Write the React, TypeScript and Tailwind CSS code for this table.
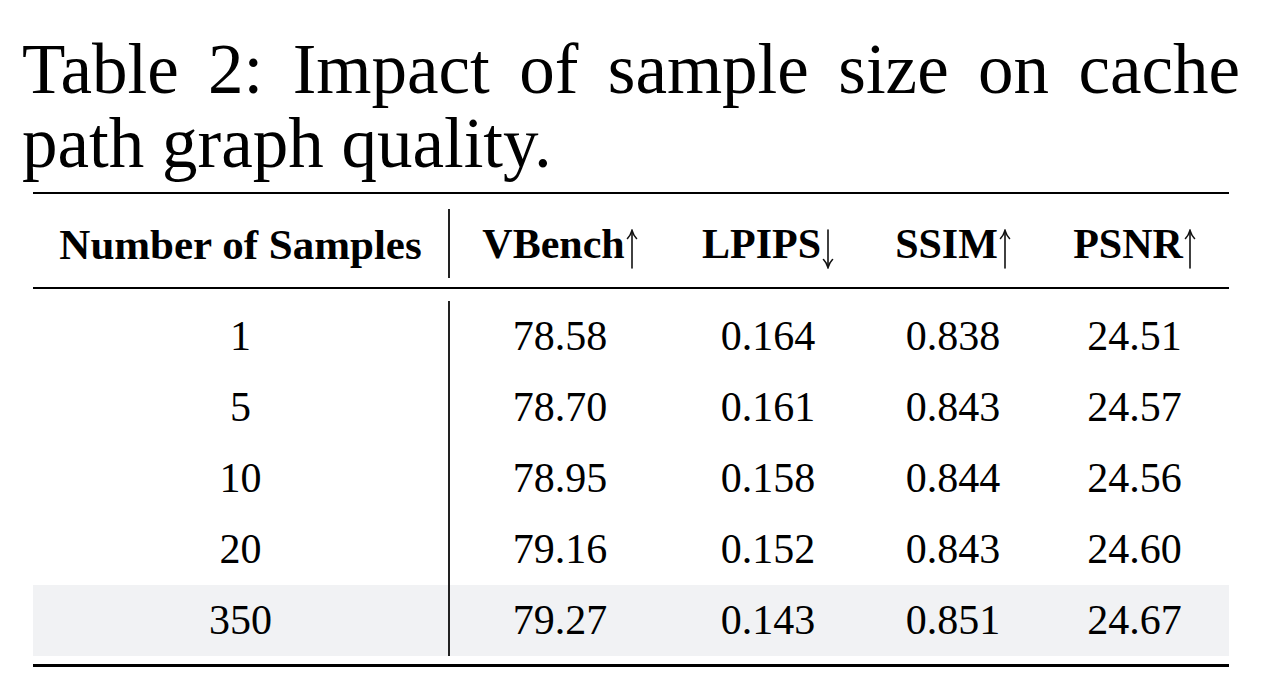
import React from "react";

const rows = [
  ["1", "78.58", "0.164", "0.838", "24.51"],
  ["5", "78.70", "0.161", "0.843", "24.57"],
  ["10", "78.95", "0.158", "0.844", "24.56"],
  ["20", "79.16", "0.152", "0.843", "24.60"],
  ["350", "79.27", "0.143", "0.851", "24.67"],
];

const cols = "grid grid-cols-[417px_220px_196px_174px_189px]";

// thin math-style arrow like \uparrow / \downarrow
function Arrow({ down }: { down?: boolean }) {
  return (
    <svg
      viewBox="0 0 12 40"
      className={`w-[12px] h-[40px] ml-[1px] mt-[10px] ${down ? "rotate-180" : ""}`}
      fill="none"
      stroke="#111"
      strokeWidth="1.6"
      strokeLinecap="round"
    >
      <path d="M6 2 V39" />
      <path d="M1.5 9.5 Q4.5 6.5 6 1.5 Q7.5 6.5 10.5 9.5" />
    </svg>
  );
}

function Head({ label, down }: { label: string; down?: boolean }) {
  return (
    <div className="flex items-center justify-center">
      <span className="font-bold">{label}</span>
      <Arrow down={down} />
    </div>
  );
}

export default function App() {
  return (
    <div
      className="w-[1268px] h-[690px] bg-white text-black overflow-hidden"
      style={{ fontFamily: '"Liberation Serif", "Times New Roman", serif' }}
    >
      {/* caption */}
      <p className="ml-[22px] mt-[32px] w-[1218px] text-[71px] leading-[74px] text-justify">
        Table 2: Impact of sample size on cache path graph quality.
      </p>

      {/* table */}
      <div className="ml-[33px] mt-[12px] w-[1196px] text-[42px] leading-[48px]">
        <div className="h-[2px] bg-black" />
        <div className={`${cols} pt-[15px] pb-[9px]`}>
          <div className="h-[69px] border-r-[2px] border-[#222] flex items-center justify-center font-bold text-[43px] pt-[2px]">
            Number of Samples
          </div>
          <Head label="VBench" />
          <Head label="LPIPS" down />
          <Head label="SSIM" />
          <Head label="PSNR" />
        </div>
        <div className="h-[1.5px] bg-black" />
        <div className="pt-[12px] pb-[8px]">
          {rows.map((r, i) => (
            <div key={i} className={`${cols} h-[71px] ${i === rows.length - 1 ? "bg-[#f1f2f4]" : ""}`}>
              {r.map((c, j) => (
                <div
                  key={j}
                  className={`flex items-center justify-center ${j === 0 ? "border-r-[2px] border-[#222]" : ""}`}
                >
                  {c}
                </div>
              ))}
            </div>
          ))}
        </div>
        <div className="h-[3px] bg-black" />
      </div>
    </div>
  );
}
